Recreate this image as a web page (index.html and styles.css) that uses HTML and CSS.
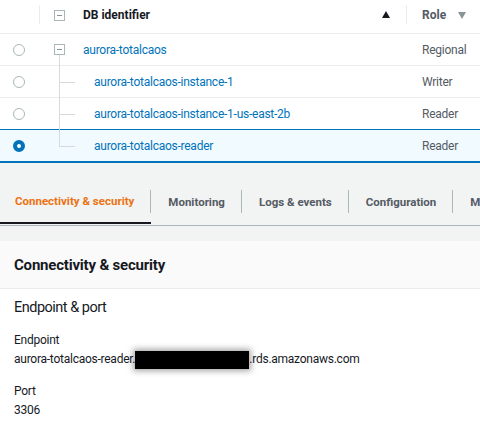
FILE: index.html
```html
<!DOCTYPE html>
<html>
<head>
<meta charset="utf-8">
<link rel="stylesheet" href="styles.css">
</head>
<body>
<div class="table">
  <div class="thead">
    <div class="c-sel"><span class="divider"></span></div>
    <div class="c-tree"><span class="box"></span></div>
    <div class="c-name th">DB identifier <span class="sort-up"></span></div>
    <div class="c-role th"><span class="divider left"></span>Role <span class="sort-down"></span></div>
  </div>
  <div class="row">
    <div class="c-sel"><span class="radio"></span></div>
    <div class="c-tree root"><span class="box"></span></div>
    <div class="c-name"><a class="link">aurora-totalcaos</a></div>
    <div class="c-role">Regional</div>
  </div>
  <div class="row">
    <div class="c-sel"><span class="radio"></span></div>
    <div class="c-tree child"></div>
    <div class="c-name indent"><a class="link">aurora-totalcaos-instance-1</a></div>
    <div class="c-role">Writer</div>
  </div>
  <div class="row pre-sel">
    <div class="c-sel"><span class="radio"></span></div>
    <div class="c-tree child"></div>
    <div class="c-name indent"><a class="link">aurora-totalcaos-instance-1-us-east-2b</a></div>
    <div class="c-role">Reader</div>
  </div>
  <div class="row selected">
    <div class="c-sel"><span class="radio on"></span></div>
    <div class="c-tree child last"></div>
    <div class="c-name indent"><a class="link">aurora-totalcaos-reader</a></div>
    <div class="c-role">Reader</div>
  </div>
</div>
<div class="tabs-area">
  <div class="tabs">
    <div class="tab active"><span>Connectivity &amp; security</span></div>
    <div class="tab"><span>Monitoring</span></div>
    <div class="tab"><span>Logs &amp; events</span></div>
    <div class="tab"><span>Configuration</span></div>
    <div class="tab last"><span>Ma</span></div>
  </div>
</div>
<div class="panel">
  <div class="panel-head">Connectivity &amp; security</div>
  <div class="panel-body">
    <h3 class="sub">Endpoint &amp; port</h3>
    <div class="kv">
      <div class="k">Endpoint</div>
      <div class="v">aurora-totalcaos-reader.<span class="redact"></span>.rds.amazonaws.com</div>
    </div>
    <div class="kv">
      <div class="k">Port</div>
      <div class="v">3306</div>
    </div>
  </div>
</div>
</body>
</html>
```
FILE: styles.css
```css
* { box-sizing: border-box; }
html, body { margin: 0; padding: 0; }
body {
  width: 480px;
  height: 431px;
  overflow: hidden;
  font-family: Roboto, "Open Sans", sans-serif;
  font-size: 12px;
  letter-spacing: -0.25px;
  color: #16191f;
  background: #f2f3f3;
}
.table { background: #fff; }
.thead, .row {
  display: flex;
  align-items: center;
  border-bottom: 1px solid #eaeded;
  height: 32px;
}
.thead { height: 34px; }
.row.pre-sel { border-bottom-color: #0073bb; }
.row.selected {
  background: #f1faff;
  border-bottom: 2px solid #0073bb;
  height: 33px;
}
.c-sel {
  width: 40px;
  height: 100%;
  display: flex;
  align-items: center;
  justify-content: center;
  position: relative;
  padding-right: 2px;
}
.thead .divider {
  position: absolute;
  right: 0;
  top: 5px;
  width: 1px;
  height: 19px;
  background: #eaeded;
}
.c-tree {
  width: 38px;
  height: 100%;
  position: relative;
  display: flex;
  align-items: center;
  padding-left: 14px;
}
.box {
  width: 11px;
  height: 11px;
  border: 1px solid #aab7b8;
  position: relative;
  background: #fff;
}
.box::after {
  content: "";
  position: absolute;
  left: 2px;
  right: 2px;
  top: 4px;
  height: 1px;
  background: #879596;
}
.thead .box { margin-top: -2px; }
.c-tree.root::after {
  content: "";
  position: absolute;
  left: 19px;
  top: 21px;
  bottom: -1px;
  width: 1px;
  background: #d5dbdb;
}
.c-tree.child::before {
  content: "";
  position: absolute;
  left: 19px;
  top: -1px;
  bottom: -1px;
  width: 1px;
  background: #d5dbdb;
}
.c-tree.child.last::before { bottom: 50%; }
.c-tree.child::after {
  content: "";
  position: absolute;
  left: 19px;
  width: 16px;
  top: 50%;
  height: 1px;
  background: #d5dbdb;
}
.c-name {
  flex: 1;
  display: flex;
  align-items: center;
  padding-left: 5px;
  height: 100%;
  position: relative;
}
.c-name.indent { padding-left: 16px; }
.th {
  font-weight: 700;
  font-size: 12px;
  letter-spacing: 0;
  color: #16191f;
}
.thead .c-name, .thead .c-role { padding-bottom: 3px; }
.sort-up {
  position: absolute;
  right: 16px;
  top: 11px;
  width: 0;
  height: 0;
  border-left: 4px solid transparent;
  border-right: 4px solid transparent;
  border-bottom: 7px solid #16191f;
}
.c-role {
  width: 74px;
  height: 100%;
  display: flex;
  align-items: center;
  padding-left: 16px;
  color: #545b64;
  position: relative;
}
.c-role.th { color: #545b64; }
.divider.left {
  position: absolute;
  left: 0;
  top: 5px;
  width: 1px;
  height: 19px;
  background: #eaeded;
}
.sort-down {
  position: absolute;
  right: 14px;
  top: 12px;
  border-left: 4.5px solid transparent;
  border-right: 4.5px solid transparent;
  border-top: 7px solid #879596;
}
.link { color: #0073bb; text-decoration: none; }
.radio {
  width: 12px;
  height: 12px;
  border-radius: 50%;
  border: 1px solid #aab7b8;
  background: #fff;
}
.radio.on {
  border: 4px solid #0073bb;
}
.tabs-area {
  height: 78px;
  padding-top: 16px;
}
.tabs {
  display: flex;
  height: 47px;
  border-bottom: 1px solid #aab7b8;
  white-space: nowrap;
  overflow: hidden;
}
.tab {
  height: 45px;
  display: flex;
  align-items: center;
  position: relative;
  font-weight: 700;
  font-size: 11.5px;
  letter-spacing: 0;
  color: #545b64;
  padding: 0 17px;
  flex-shrink: 0;
}
.tab:first-child { padding-left: 15px; }
.tab::after {
  content: "";
  position: absolute;
  right: 0;
  top: 11px;
  height: 23px;
  width: 1px;
  background: #aab7b8;
}
.tab.last::after { display: none; }
.tab.active {
  color: #ec7211;
  border-bottom: 2px solid #16191f;
}
.panel {
  background: #fff;
}
.panel-head {
  background: #fafafa;
  border-bottom: 1px solid #eaeded;
  height: 48px;
  display: flex;
  align-items: center;
  padding-left: 14px;
  font-weight: 700;
  font-size: 15px;
  letter-spacing: -0.2px;
  color: #16191f;
}
.panel-body {
  padding: 10px 14px 30px;
}
.sub {
  margin: 0 0 15px;
  font-size: 14.5px;
  letter-spacing: -0.5px;
  font-weight: 400;
  color: #16191f;
}
.kv { margin-bottom: 13px; }
.k, .v { line-height: 19px; font-size: 12px; }
.redact {
  display: inline-block;
  width: 114px;
  height: 18px;
  background: #000;
  vertical-align: middle;
  box-shadow: 0 0 6px 2px rgba(0,0,0,0.35);
}
```
